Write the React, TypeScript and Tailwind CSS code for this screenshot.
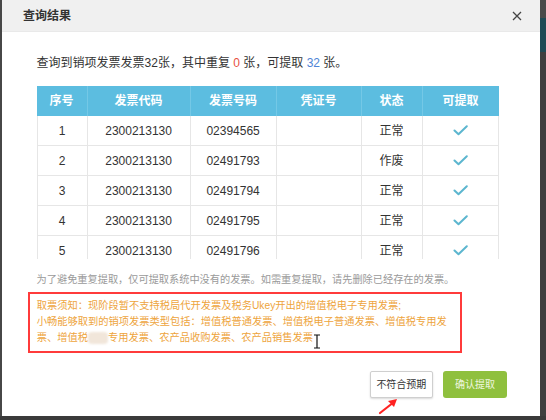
import React from "react";

const font = { fontFamily: '"Liberation Sans", "Noto Sans CJK SC", sans-serif' };

const rows = [
  ["1", "2300213130", "02394565", "", "正常"],
  ["2", "2300213130", "02491793", "", "作废"],
  ["3", "2300213130", "02491794", "", "正常"],
  ["4", "2300213130", "02491795", "", "正常"],
  ["5", "2300213130", "02491796", "", "正常"],
];

const widths = ["w-[51px]", "w-[103px]", "w-[86px]", "w-[85px]", "w-[61px]", "w-[76px]"];
const heads = ["序号", "发票代码", "发票号码", "凭证号", "状态", "可提取"];

function Check() {
  return (
    <svg width="15" height="11" viewBox="0 0 15 11" fill="none">
      <path d="M1.5 5.5 L5.5 9.3 L13.8 1.2" stroke="#5cb6cf" strokeWidth="2" strokeLinecap="round" strokeLinejoin="round" />
    </svg>
  );
}

export default function App() {
  return (
    <div className="w-[546px] h-[420px] bg-[#3c3c3c] flex flex-col overflow-hidden" style={font}>
      <div className="flex h-[416px]">
        <div className="w-[2px] bg-[#474747]" />
        <div className="w-[538px] h-[416px] bg-white flex flex-col relative">
          {/* header */}
          <div className="h-[32px] bg-[#f0f0f0] flex items-center justify-between pl-[21px] pr-[18px] border-b border-[#e9e9e9]">
            <span className="text-[12px] font-bold text-[#333]">查询结果</span>
            <svg width="10" height="10" viewBox="0 0 10 10">
              <path d="M1 1 L9 9 M9 1 L1 9" stroke="#444" strokeWidth="1.3" />
            </svg>
          </div>
          {/* summary */}
          <div className="mt-[22px] ml-[34.6px] text-[12px] leading-[18px] text-[#333] whitespace-nowrap">
            查询到销项发票发票32张，其中重复 <span className="text-[#e8503f]">0</span> 张，可提取{" "}
            <span className="text-[#4d84d6]">32</span> 张。
          </div>
          {/* table */}
          <div className="mt-[14.4px] ml-[34.6px] w-[462px] h-[172.3px] overflow-hidden">
            <div className="flex h-[30px] bg-[#5cbde0]">
              {heads.map((h, i) => (
                <div
                  key={h}
                  className={`${widths[i]} flex items-center justify-center text-white font-bold text-[12px] ${i < 5 ? "border-r border-[#74c8e6]" : ""}`}
                >
                  {h}
                </div>
              ))}
            </div>
            {rows.map((r, ri) => (
              <div key={ri} className="flex h-[30px] border-b border-[#e6e6e6]">
                {r.map((c, i) => (
                  <div
                    key={i}
                    className={`${widths[i]} flex items-center justify-center text-[12px] text-[#333] border-r border-[#e6e6e6] ${i === 0 ? "border-l" : ""}`}
                  >
                    {c}
                  </div>
                ))}
                <div className={`${widths[5]} flex items-center justify-center border-r border-[#e6e6e6]`}>
                  <Check />
                </div>
              </div>
            ))}
          </div>
          {/* note */}
          <div className="mt-[14px] ml-[34.6px] text-[10.2px] leading-[14px] text-[#9a9a9a] whitespace-nowrap">
            为了避免重复提取，仅可提取系统中没有的发票。如需重复提取，请先删除已经存在的发票。
          </div>
          {/* red box */}
          <div className="mt-[5px] ml-[26px] w-[434px] h-[61.5px] border-2 border-[#ff3b3b] pl-[6.7px] pt-[4px] text-[10.25px] leading-[16px] text-[#eea43c] whitespace-nowrap">
            <div>取票须知：现阶段暂不支持税局代开发票及税务Ukey开出的增值税电子专用发票;</div>
            <div>小畅能够取到的销项发票类型包括：增值税普通发票、增值税电子普通发票、增值税专用发</div>
            <div className="flex items-center">
              <span>票、增值税</span>
              <span className="inline-block w-[20px] h-[12px] bg-[#f1e6da] rounded-[4px] blur-[1px]" />
              <span>专用发票、农产品收购发票、农产品销售发票</span>
            </div>
          </div>
          {/* buttons */}
          <div className="mt-[18.3px] flex justify-end gap-[10.6px] pr-[33.3px]">
            <div className="w-[62.7px] h-[27px] flex items-center justify-center bg-white border border-[#cfcfcf] rounded-[2px] shadow-[0_1px_2px_rgba(0,0,0,0.15)] text-[10px] text-[#333]">
              不符合预期
            </div>
            <div className="w-[63.4px] h-[27px] flex items-center justify-center bg-[#8fc03e] rounded-[3px] text-[10px] text-[#eef6df]">
              确认提取
            </div>
          </div>
          {/* red arrow overlay */}
          <svg className="absolute left-[374px] top-[396px]" width="26" height="20" viewBox="0 0 26 20">
            <path d="M4 17 L18 6" stroke="#f22" strokeWidth="2.2" strokeLinecap="round" />
            <path d="M21 3 L12 5 L18 11 Z" fill="#f22" />
          </svg>
          {/* text cursor */}
          <svg className="absolute left-[311px] top-[334px]" width="8" height="15" viewBox="0 0 8 15">
            <path d="M1 1 H7 M4 1 V14 M1 14 H7" stroke="#111" strokeWidth="1.2" fill="none" />
          </svg>
        </div>
        <div className="w-[6px] flex flex-col">
          <div className="h-[18px] bg-[#4a4a4a]" />
          <div className="h-[34px] bg-[#1f4a55]" />
          <div className="flex-1 bg-[#3f3f3f]" />
        </div>
      </div>
      <div className="flex-1 bg-[#3a3a3a]" />
    </div>
  );
}
